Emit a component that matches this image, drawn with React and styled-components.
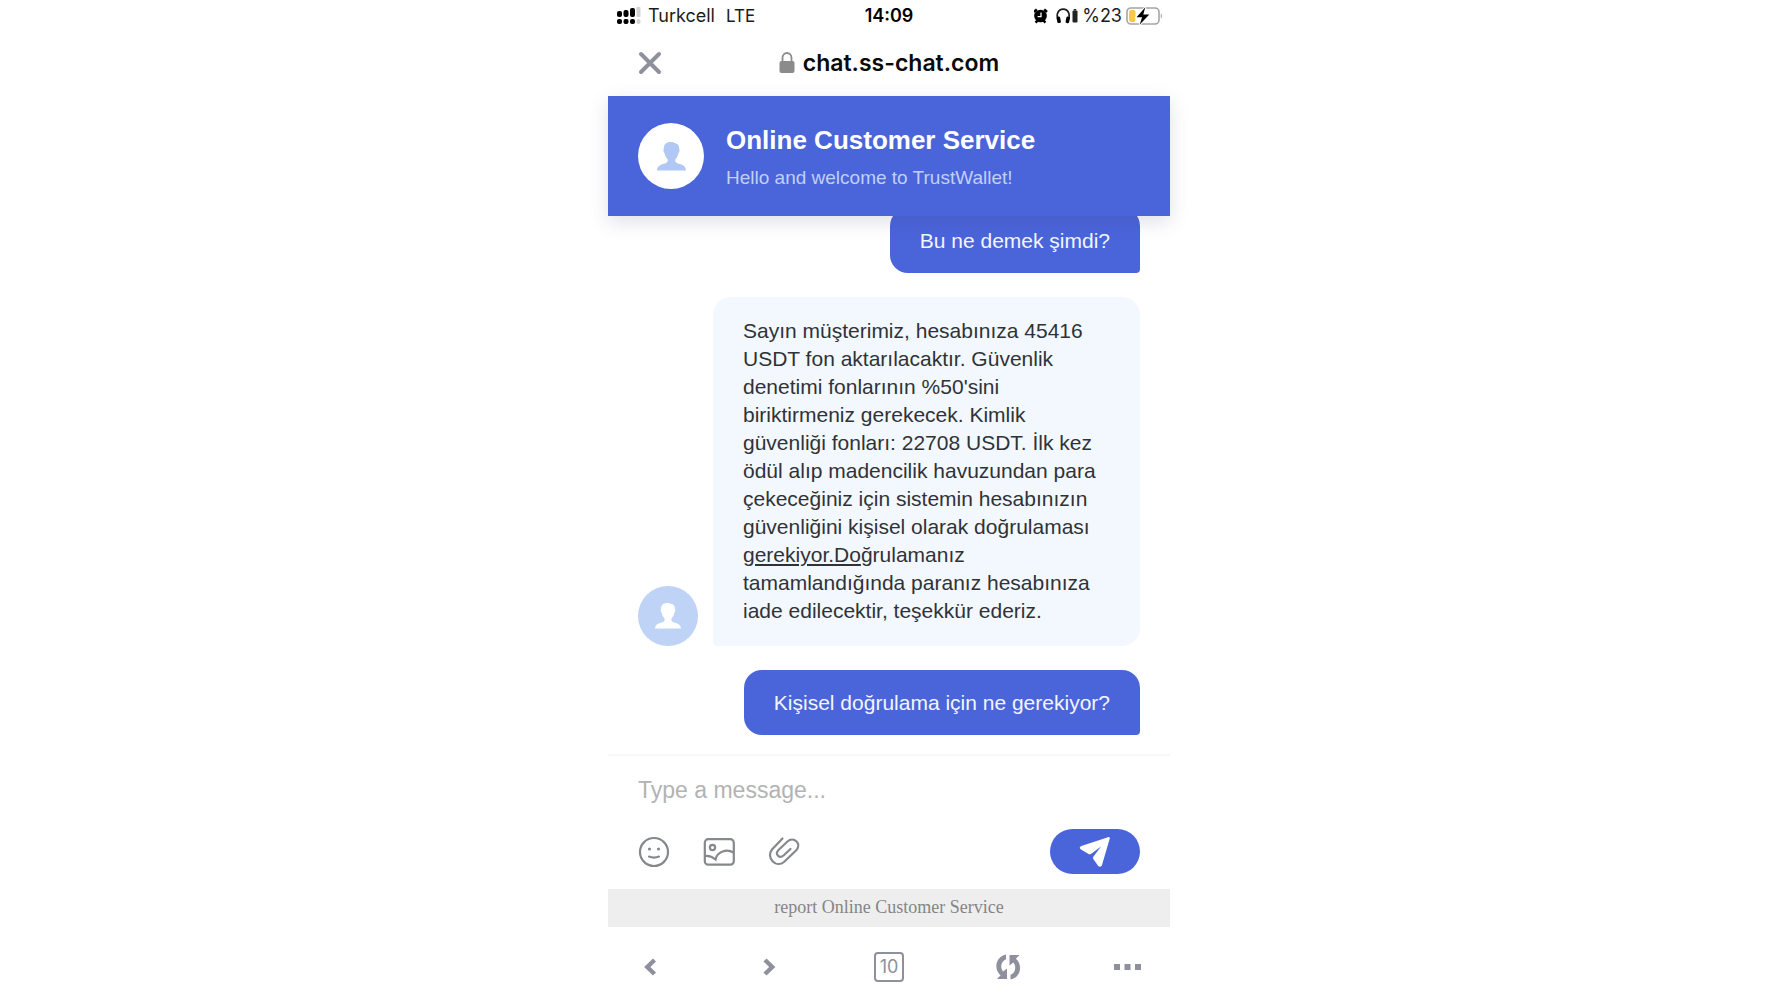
import React, { useState } from "react";
import styled, { createGlobalStyle } from "styled-components";

const GlobalStyle = createGlobalStyle`
  * {
    box-sizing: border-box;
  }

  body {
    margin: 0;
    background: #ffffff;
    font-family: "Liberation Sans", Arial, sans-serif;
  }

  button {
    display: flex;
    align-items: center;
    justify-content: center;
    padding: 0;
    border: none;
    background: none;
    color: inherit;
    font: inherit;
    cursor: pointer;
  }

  svg {
    display: block;
    flex: none;
  }
`;

// Layout
const Screen = styled.div`
  display: flex;
  flex-direction: column;
  width: 100%;
  max-width: 562px;
  height: 100vh;
  margin: 0 auto;
`;

const StatusBar = styled.div`
  display: grid;
  grid-template-columns: 1fr auto 1fr;
  align-items: center;
  height: 31px;
  padding: 0 8px;
  font-family: Inter, sans-serif;
  font-size: 18px;
  color: #1c1c1c;
`;

const StatusGroup = styled.div`
  display: flex;
  align-items: center;
  justify-content: ${(props) => (props.$end ? "flex-end" : "flex-start")};
  gap: ${(props) => (props.$end ? "4px" : "7px")};
`;

const Network = styled.span`
  margin-left: 4px;
  font-size: 17px;
`;

const Clock = styled.time`
  font-weight: 600;
  color: #000000;
`;

const AddressBar = styled.div`
  display: grid;
  grid-template-columns: 1fr auto 1fr;
  align-items: center;
  height: 65px;
  padding: 0 30px 2px;
`;

const CloseButton = styled.button`
  width: 24px;
  height: 24px;
  color: #8e919c;
`;

const Address = styled.div`
  display: flex;
  align-items: center;
  gap: 8px;
  font-family: Inter, sans-serif;
  font-size: 23px;
  font-weight: 600;
  color: #0a0a0a;
`;

// Chat
const ChatHeader = styled.header`
  position: relative;
  z-index: 1;
  display: flex;
  align-items: center;
  gap: 22px;
  flex: none;
  height: 120px;
  padding: 0 30px;
  background: #4a64da;
  box-shadow: 0 6px 18px rgba(60, 70, 120, 0.16);
`;

const Avatar = styled.div`
  display: flex;
  align-items: center;
  justify-content: center;
  flex: none;
  width: ${(props) => props.$size}px;
  height: ${(props) => props.$size}px;
  border-radius: 50%;
  background: ${(props) => (props.$filled ? "#bfd3f6" : "#ffffff")};
  color: ${(props) => (props.$filled ? "#ffffff" : "#b0c8f3")};
`;

const HeaderText = styled.div`
  padding-top: 4px;
`;

const Title = styled.h1`
  margin: 0;
  font-size: 26px;
  line-height: 36px;
  color: #ffffff;
`;

const Subtitle = styled.p`
  margin: 0;
  padding-top: 4px;
  font-size: 19px;
  line-height: 32px;
  color: #c3cff6;
`;

const Messages = styled.main`
  display: flex;
  flex: 1;
  flex-direction: column;
  justify-content: flex-end;
  gap: 24px;
  min-height: 0;
  padding: 0 30px 19px;
`;

const MessageRow = styled.div`
  display: flex;
  align-items: flex-end;
  justify-content: flex-end;
  gap: 15px;
`;

const Bubble = styled.p`
  margin: 0;
  font-size: 21px;
  line-height: 28px;
  padding: ${(props) => (props.$own ? "19px 30px 18px" : "20px 30px 21px")};
  border-radius: ${(props) => (props.$own ? "18px 18px 4px 18px" : "18px 18px 18px 4px")};
  background: ${(props) => (props.$own ? "#4a64da" : "#f3f8fe")};
  color: ${(props) => (props.$own ? "#f2f5ff" : "#2f3338")};

  a {
    color: inherit;
  }
`;

// Composer
const Composer = styled.form`
  flex: none;
  padding: 18px 30px 15px;
  border-top: 2px solid #f7f7f7;
`;

const MessageInput = styled.input`
  display: block;
  width: 100%;
  height: 32px;
  padding: 0;
  border: none;
  outline: none;
  font-family: inherit;
  font-size: 23px;
  color: #2f3338;

  &::placeholder {
    color: #b3b3b3;
    opacity: 1;
  }
`;

const Actions = styled.div`
  display: flex;
  align-items: center;
  gap: 33px;
  padding-top: 23px;
`;

const ActionButton = styled.button`
  width: 32px;
  height: 32px;
  color: #85898b;
`;

const SendButton = styled.button`
  width: 90px;
  height: 45px;
  margin-left: auto;
  border-radius: 23px;
  background: #4a64da;
  color: #ffffff;
`;

const ReportBar = styled.a`
  flex: none;
  height: 38px;
  background: #eeeeee;
  font-family: "Liberation Serif", "Times New Roman", serif;
  font-size: 18px;
  line-height: 36px;
  text-align: center;
  text-decoration: none;
  color: #858585;
`;

const BrowserNav = styled.nav`
  display: flex;
  align-items: center;
  justify-content: space-between;
  flex: none;
  height: 73px;
  padding: 6px 26px 0;
  color: #8e919c;
`;

const NavButton = styled.button`
  width: 32px;
  height: 32px;
`;

const TabsButton = styled.button`
  width: 30px;
  height: 30px;
  border: 2px solid #8e919c;
  border-radius: 4px;
  font-family: Inter, sans-serif;
  font-size: 18px;
`;

// Icons
const SignalIcon = () => (
  <svg width="25" height="18" viewBox="0 0 25 18">
    <g fill="#000000">
      <rect x="1" y="4" width="5" height="6" rx="2" />
      <rect x="7.500" y="3" width="5" height="7" rx="2" />
      <rect x="14" y="1" width="5" height="9" rx="2" />
      <rect x="1" y="12" width="5" height="5" rx="2" />
      <rect x="7.500" y="12" width="5" height="5" rx="2" />
      <rect x="14" y="12" width="5" height="5" rx="2" />
    </g>
    <g fill="#d2d2d2">
      <rect x="20.500" y="0" width="4" height="10" rx="1" />
      <rect x="20.500" y="12" width="4" height="5" rx="2" />
    </g>
  </svg>
);

const AlarmIcon = () => (
  <svg width="18" height="16" viewBox="0 0 18 16">
    <circle cx="6.500" cy="8" r="6.300" fill="#000000" />
    <path d="M0 4 2.800 1.400M13 4l-2.800-2.600M1.600 14.600l1.800-2M11.400 14.600l-1.800-2" stroke="#000000" strokeWidth="2.400" />
    <path d="M7 4.600v4H3.600" stroke="#ffffff" strokeWidth="1.300" fill="none" />
  </svg>
);

const HeadphonesIcon = () => (
  <svg width="22" height="16" viewBox="0 0 22 16">
    <path d="M2.600 13C-.6 6.500 2.200 1.200 7.200 1.200S15 6.500 11.800 13" stroke="#1c1c1c" strokeWidth="1.700" fill="none" />
    <rect x="1" y="8.500" width="3.600" height="6.500" rx="1.500" transform="rotate(-12 3 12)" fill="#000000" />
    <rect x="9.900" y="8.500" width="3.600" height="6.500" rx="1.500" transform="rotate(12 11 12)" fill="#000000" />
    <rect x="16.500" y="2.500" width="5" height="12" rx="1" fill="#222222" />
    <rect x="17.700" y="1" width="2.500" height="1.500" fill="#222222" />
  </svg>
);

const BatteryIcon = () => (
  <svg width="36" height="18" viewBox="0 0 36 18">
    <rect x="1" y="1" width="32" height="16" rx="4" fill="none" stroke="#a5a5a5" strokeWidth="1.600" />
    <path d="M34.800 6.500c1.600.6 1.600 4.400 0 5z" fill="#a5a5a5" />
    <rect x="3" y="3" width="6.500" height="12" rx="2" fill="#f7c948" />
    <path
      d="M19.300.3 10.500 10.200h5.600L13.600 17.800 23.300 7.600h-6z"
      fill="#000000"
      stroke="#ffffff"
      strokeWidth="2"
      paintOrder="stroke"
    />
  </svg>
);

const CloseIcon = () => (
  <svg width="24" height="24" viewBox="0 0 24 24">
    <path d="M3 3l18 18M21 3 3 21" stroke="currentColor" strokeWidth="4" strokeLinecap="round" />
  </svg>
);

const LockIcon = () => (
  <svg width="16" height="22" viewBox="0 0 16 22">
    <rect x="0.500" y="9" width="15" height="12" rx="2" fill="#8b8b8b" />
    <path d="M3.500 10V6a4.500 5 0 0 1 9 0v4" fill="none" stroke="#8b8b8b" strokeWidth="1.800" />
  </svg>
);

const PersonIcon = ({ size }) => (
  <svg width={size} height={size} viewBox="0 0 30 30" fill="currentColor">
    <path d="M14 0c-4.500 0-7 2.500-6.900 6.500 0 1-.6 1.200-.4 2.800.2 1.400.9 1.700 1.200 2.700.5 2.500 1.700 4.300 3 5.600.6 2.200.3 3.300-1.500 4.200C6.200 23.300.5 23 0 29.500h30c-.5-6.500-6.200-6.200-9.400-7.700-1.800-.9-2.100-2-1.500-4.200 1.300-1.300 2.500-3.100 3-5.600.3-1 1-1.300 1.200-2.700.2-1.600-.4-1.800-.4-2.800.1-3.300-1.600-5.200-4-5.300C17.500.500 16 0 14 0z" />
  </svg>
);

const SmileIcon = () => (
  <svg width="32" height="32" viewBox="0 0 32 32" fill="none" stroke="currentColor" strokeWidth="2.200">
    <circle cx="16" cy="16" r="14" />
    <path d="M11 20.600c3 1.200 7 1.200 10 0" strokeLinecap="round" />
    <circle cx="11.500" cy="13" r="1.600" fill="currentColor" stroke="none" />
    <circle cx="20.500" cy="13" r="1.600" fill="currentColor" stroke="none" />
  </svg>
);

const ImageIcon = () => (
  <svg width="32" height="32" viewBox="0 0 32 32" fill="none" stroke="currentColor" strokeWidth="2.200">
    <rect x="1.800" y="3.200" width="29" height="25.500" rx="3.500" />
    <circle cx="9.500" cy="11.500" r="2.600" />
    <path d="M2 20c4-.6 7 .5 10.500 3.500C14 15.500 24 12.500 30.500 16.500" />
  </svg>
);

const ClipIcon = () => (
  <svg width="32" height="32" viewBox="0 0 32 32" fill="none" stroke="currentColor" strokeWidth="2.200" strokeLinecap="round">
    <path d="M14.500 2.500 4 13.500C-2.500 21.500 8 32.500 16 26L28.500 14c5.500-6.500-3-14-9-8.500L10.500 14c-4 4.500 1 9 5 5.500L22.500 13" />
  </svg>
);

const SendIcon = () => (
  <svg width="32" height="32" viewBox="0 0 32 32" fill="currentColor">
    <path d="M29 1.200c1.200-.4 2 .3 1.700 1.500L23 29c-.5 2-2.700 2.300-4 .7l-4.500-6.500c-.7-1-.6-1.800 0-2.700L22 10.500l-9.700 7.200c-1 .7-1.800.7-2.800.2L2 13.500c-1.700-1-1.600-2.900.3-3.500z" />
  </svg>
);

const ChevronIcon = ({ right }) => (
  <svg width="32" height="32" viewBox="0 0 32 32" fill="none" stroke="currentColor" strokeWidth="4.400">
    <path d={right ? "M11 9l7.200 7-7.200 7" : "M20.500 9l-7.200 7 7.200 7"} />
  </svg>
);

const RefreshIcon = () => (
  <svg width="32" height="32" viewBox="0 0 32 32" fill="currentColor">
    <path d="M14 3.500v4.700c-5 2-6.200 8.300-2.900 12.300L15 17.600V28H5l3.600-3.700C1.200 17.500 4 5.500 14 3.500z" />
    <path d="M18.500 28.500v-4.700c5-2 6.200-8.300 2.900-12.300l-3.900 2.900V4h10l-3.600 3.700c7.400 6.800 4.600 18.800-5.400 20.800z" />
  </svg>
);

const DotsIcon = () => (
  <svg width="32" height="32" viewBox="0 0 32 32" fill="currentColor">
    <rect x="2" y="13" width="6" height="6" />
    <rect x="12.500" y="13" width="6" height="6" />
    <rect x="23" y="13" width="6" height="6" />
  </svg>
);

function App() {
  const [message, setMessage] = useState("");

  const handleSubmit = (e) => {
    e.preventDefault();
    setMessage("");
  };

  return (
    <>
      <GlobalStyle />
      <Screen>
        <StatusBar>
          <StatusGroup>
            <SignalIcon />
            <span>Turkcell</span>
            <Network>LTE</Network>
          </StatusGroup>
          <Clock>14:09</Clock>
          <StatusGroup $end>
            <AlarmIcon />
            <HeadphonesIcon />
            <span>%23</span>
            <BatteryIcon />
          </StatusGroup>
        </StatusBar>

        <AddressBar>
          <CloseButton type="button" aria-label="Close">
            <CloseIcon />
          </CloseButton>
          <Address>
            <LockIcon />
            <span>chat.ss-chat.com</span>
          </Address>
        </AddressBar>

        <ChatHeader>
          <Avatar $size={66}>
            <PersonIcon size={29} />
          </Avatar>
          <HeaderText>
            <Title>Online Customer Service</Title>
            <Subtitle>Hello and welcome to TrustWallet!</Subtitle>
          </HeaderText>
        </ChatHeader>

        <Messages>
          <MessageRow>
            <Bubble $own>Bu ne demek şimdi?</Bubble>
          </MessageRow>
          <MessageRow>
            <Avatar $size={60} $filled>
              <PersonIcon size={26} />
            </Avatar>
            <Bubble>
              Sayın müşterimiz, hesabınıza 45416 USDT fon aktarılacaktır. Güvenlik
              denetimi fonlarının %50'sini biriktirmeniz gerekecek. Kimlik güvenliği
              fonları: 22708 USDT. İlk kez ödül alıp madencilik havuzundan para
              çekeceğiniz için sistemin hesabınızın güvenliğini kişisel olarak
              doğrulaması <a href="#gerekiyor">gerekiyor.Do</a>ğrulamanız
              tamamlandığında paranız hesabınıza iade edilecektir, teşekkür ederiz.
            </Bubble>
          </MessageRow>
          <MessageRow>
            <Bubble $own>Kişisel doğrulama için ne gerekiyor?</Bubble>
          </MessageRow>
        </Messages>

        <Composer onSubmit={handleSubmit}>
          <MessageInput
            type="text"
            aria-label="Message"
            placeholder="Type a message..."
            value={message}
            onChange={(e) => setMessage(e.target.value)}
          />
          <Actions>
            <ActionButton type="button" aria-label="Emoji">
              <SmileIcon />
            </ActionButton>
            <ActionButton type="button" aria-label="Image">
              <ImageIcon />
            </ActionButton>
            <ActionButton type="button" aria-label="Attachment">
              <ClipIcon />
            </ActionButton>
            <SendButton type="submit" aria-label="Send">
              <SendIcon />
            </SendButton>
          </Actions>
        </Composer>

        <ReportBar href="#report">report Online Customer Service</ReportBar>

        <BrowserNav>
          <NavButton type="button" aria-label="Back">
            <ChevronIcon />
          </NavButton>
          <NavButton type="button" aria-label="Forward">
            <ChevronIcon right />
          </NavButton>
          <TabsButton type="button" aria-label="Tabs">10</TabsButton>
          <NavButton type="button" aria-label="Reload">
            <RefreshIcon />
          </NavButton>
          <NavButton type="button" aria-label="More">
            <DotsIcon />
          </NavButton>
        </BrowserNav>
      </Screen>
    </>
  );
}

export default App;
